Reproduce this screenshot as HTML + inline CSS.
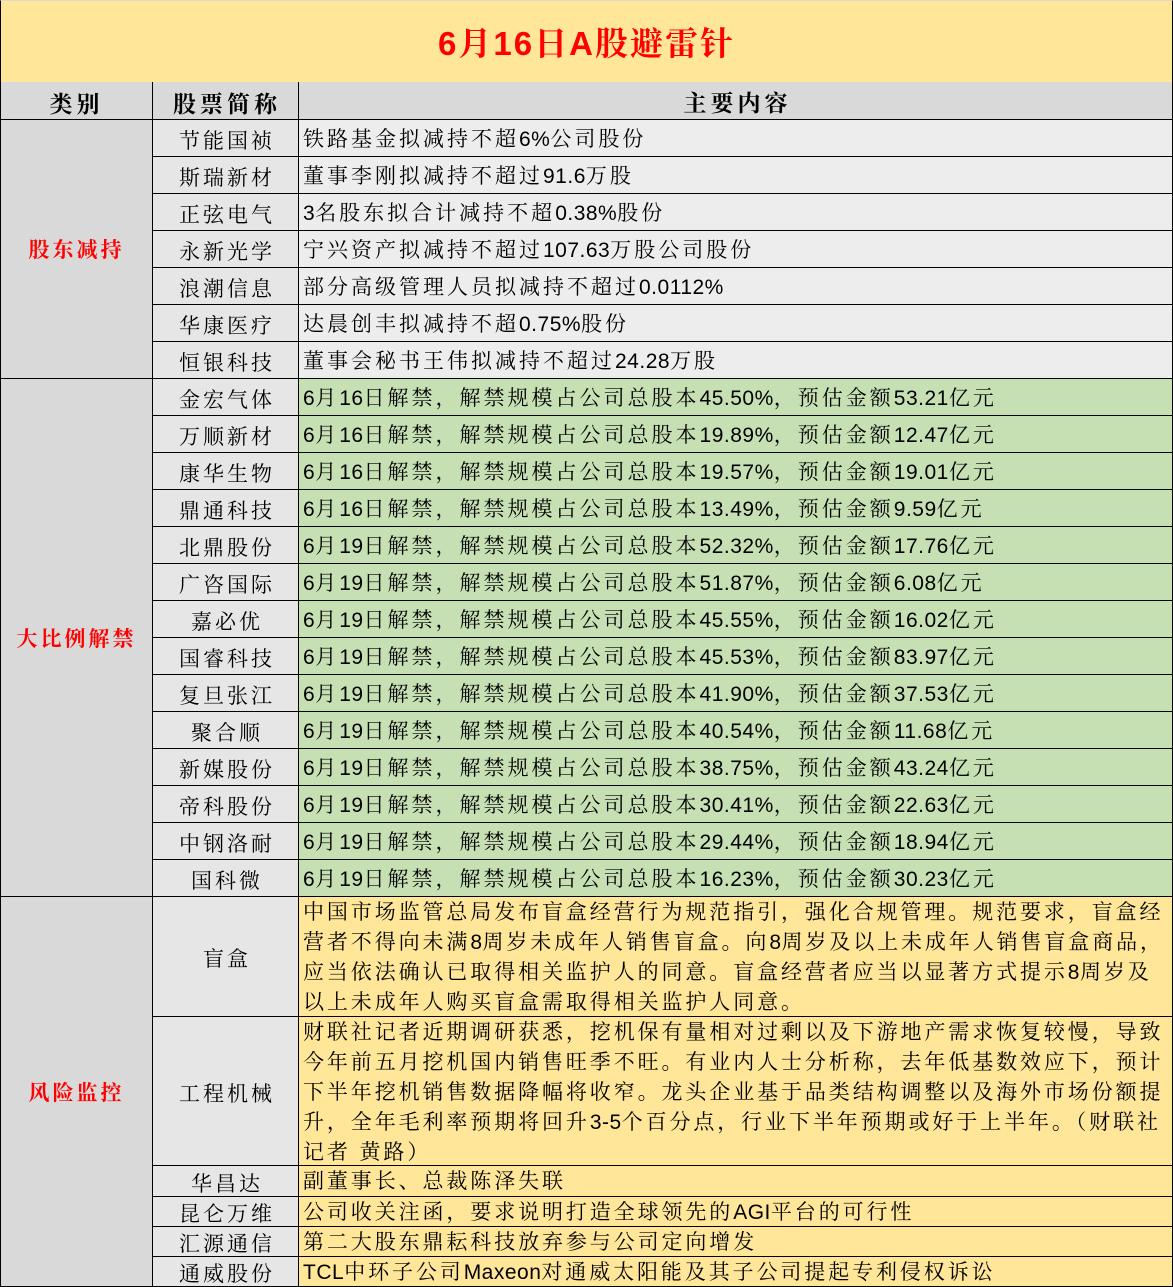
<!DOCTYPE html>
<html><head><meta charset="utf-8"><style>
*{margin:0;padding:0;box-sizing:border-box}
body{width:1173px;height:1287px;background:#fff;position:relative;overflow:hidden;font-family:"Liberation Sans","Noto Serif CJK SC",serif;color:#000}
.c{position:absolute;border-right:1px solid #000;border-bottom:1px solid #000;white-space:nowrap;overflow:hidden}
.a{left:0;width:153px;background:#D9D9D9;color:#f00;font-weight:bold;font-size:21px;letter-spacing:3px;display:flex;align-items:center;justify-content:center;border-left:1px solid #000}
.b{left:153px;width:146px;background:#E7E6E6;font-size:21px;letter-spacing:3px;text-align:center;display:flex;align-items:center;justify-content:center;padding-left:3px;padding-top:3px}
.t{left:299px;width:874px;font-size:21px;letter-spacing:3px;padding-left:4px;height:37px;line-height:39px}
i{font-style:normal;letter-spacing:0.5px}
.g1{background:#EDEDED}
.g2{background:#C6E0B4}
.g3{background:#FFE699;white-space:normal;line-height:30px;letter-spacing:2.9px;padding-right:0;padding-top:1px}
</style></head><body>
<div class="c" style="left:0;top:0;width:1173px;height:83px;background:#FFE699;border-top:1px solid #d9d9d9;border-left:1px solid #000;color:#f00;font-weight:bold;font-size:33px;letter-spacing:2px;text-align:center;line-height:86px">6月16日A股避雷针</div>
<div class="c a" style="top:82px;height:38px;color:#000;font-size:23px;letter-spacing:4px;padding-top:3px">类别</div>
<div class="c b" style="top:82px;height:38px;background:#D9D9D9;font-weight:bold;font-size:23px;letter-spacing:4px">股票简称</div>
<div class="c t" style="top:82px;height:38px;background:#D9D9D9;font-weight:bold;font-size:23px;letter-spacing:4px;text-align:center;line-height:42px">主要内容</div>

<div class="c a" style="top:120px;height:259px">股东减持</div>
<div class="c b" style="top:120px;height:37px">节能国祯</div><div class="c t g1" style="top:120px">铁路基金拟减持不超<i>6%</i>公司股份</div>
<div class="c b" style="top:157px;height:37px">斯瑞新材</div><div class="c t g1" style="top:157px">董事李刚拟减持不超过<i>91.6</i>万股</div>
<div class="c b" style="top:194px;height:37px">正弦电气</div><div class="c t g1" style="top:194px"><i>3</i>名股东拟合计减持不超<i>0.38%</i>股份</div>
<div class="c b" style="top:231px;height:37px">永新光学</div><div class="c t g1" style="top:231px">宁兴资产拟减持不超过<i>107.63</i>万股公司股份</div>
<div class="c b" style="top:268px;height:37px">浪潮信息</div><div class="c t g1" style="top:268px">部分高级管理人员拟减持不超过<i>0.0112%</i></div>
<div class="c b" style="top:305px;height:37px">华康医疗</div><div class="c t g1" style="top:305px">达晨创丰拟减持不超<i>0.75%</i>股份</div>
<div class="c b" style="top:342px;height:37px">恒银科技</div><div class="c t g1" style="top:342px">董事会秘书王伟拟减持不超过<i>24.28</i>万股</div>

<div class="c a" style="top:379px;height:518px">大比例解禁</div>
<div class="c b" style="top:379px;height:37px">金宏气体</div><div class="c t g2" style="top:379px"><i>6</i>月<i>16</i>日解禁，解禁规模占公司总股本<i>45.50%</i>，预估金额<i>53.21</i>亿元</div>
<div class="c b" style="top:416px;height:37px">万顺新材</div><div class="c t g2" style="top:416px"><i>6</i>月<i>16</i>日解禁，解禁规模占公司总股本<i>19.89%</i>，预估金额<i>12.47</i>亿元</div>
<div class="c b" style="top:453px;height:37px">康华生物</div><div class="c t g2" style="top:453px"><i>6</i>月<i>16</i>日解禁，解禁规模占公司总股本<i>19.57%</i>，预估金额<i>19.01</i>亿元</div>
<div class="c b" style="top:490px;height:37px">鼎通科技</div><div class="c t g2" style="top:490px"><i>6</i>月<i>16</i>日解禁，解禁规模占公司总股本<i>13.49%</i>，预估金额<i>9.59</i>亿元</div>
<div class="c b" style="top:527px;height:37px">北鼎股份</div><div class="c t g2" style="top:527px"><i>6</i>月<i>19</i>日解禁，解禁规模占公司总股本<i>52.32%</i>，预估金额<i>17.76</i>亿元</div>
<div class="c b" style="top:564px;height:37px">广咨国际</div><div class="c t g2" style="top:564px"><i>6</i>月<i>19</i>日解禁，解禁规模占公司总股本<i>51.87%</i>，预估金额<i>6.08</i>亿元</div>
<div class="c b" style="top:601px;height:37px">嘉必优</div><div class="c t g2" style="top:601px"><i>6</i>月<i>19</i>日解禁，解禁规模占公司总股本<i>45.55%</i>，预估金额<i>16.02</i>亿元</div>
<div class="c b" style="top:638px;height:37px">国睿科技</div><div class="c t g2" style="top:638px"><i>6</i>月<i>19</i>日解禁，解禁规模占公司总股本<i>45.53%</i>，预估金额<i>83.97</i>亿元</div>
<div class="c b" style="top:675px;height:37px">复旦张江</div><div class="c t g2" style="top:675px"><i>6</i>月<i>19</i>日解禁，解禁规模占公司总股本<i>41.90%</i>，预估金额<i>37.53</i>亿元</div>
<div class="c b" style="top:712px;height:37px">聚合顺</div><div class="c t g2" style="top:712px"><i>6</i>月<i>19</i>日解禁，解禁规模占公司总股本<i>40.54%</i>，预估金额<i>11.68</i>亿元</div>
<div class="c b" style="top:749px;height:37px">新媒股份</div><div class="c t g2" style="top:749px"><i>6</i>月<i>19</i>日解禁，解禁规模占公司总股本<i>38.75%</i>，预估金额<i>43.24</i>亿元</div>
<div class="c b" style="top:786px;height:37px">帝科股份</div><div class="c t g2" style="top:786px"><i>6</i>月<i>19</i>日解禁，解禁规模占公司总股本<i>30.41%</i>，预估金额<i>22.63</i>亿元</div>
<div class="c b" style="top:823px;height:37px">中钢洛耐</div><div class="c t g2" style="top:823px"><i>6</i>月<i>19</i>日解禁，解禁规模占公司总股本<i>29.44%</i>，预估金额<i>18.94</i>亿元</div>
<div class="c b" style="top:860px;height:37px">国科微</div><div class="c t g2" style="top:860px"><i>6</i>月<i>19</i>日解禁，解禁规模占公司总股本<i>16.23%</i>，预估金额<i>30.23</i>亿元</div>

<div class="c a" style="top:897px;height:390px">风险监控</div>
<div class="c b" style="top:897px;height:120px">盲盒</div>
<div class="c t g3" style="top:897px;height:120px">中国市场监管总局发布盲盒经营行为规范指引，强化合规管理。规范要求，盲盒经营者不得向未满<i>8</i>周岁未成年人销售盲盒。向<i>8</i>周岁及以上未成年人销售盲盒商品，应当依法确认已取得相关监护人的同意。盲盒经营者应当以显著方式提示<i>8</i>周岁及以上未成年人购买盲盒需取得相关监护人同意。</div>
<div class="c b" style="top:1017px;height:149px">工程机械</div>
<div class="c t g3" style="top:1017px;height:149px">财联社记者近期调研获悉，挖机保有量相对过剩以及下游地产需求恢复较慢，导致今年前五月挖机国内销售旺季不旺。有业内人士分析称，去年低基数效应下，预计下半年挖机销售数据降幅将收窄。龙头企业基于品类结构调整以及海外市场份额提升，全年毛利率预期将回升<i>3-5</i>个百分点，行业下半年预期或好于上半年。（财联社记者 黄路）</div>
<div class="c b" style="top:1166px;height:31px">华昌达</div><div class="c t g3" style="top:1166px;height:31px">副董事长、总裁陈泽失联</div>
<div class="c b" style="top:1197px;height:30px">昆仑万维</div><div class="c t g3" style="top:1197px;height:30px">公司收关注函，要求说明打造全球领先的<i>AGI</i>平台的可行性</div>
<div class="c b" style="top:1227px;height:30px">汇源通信</div><div class="c t g3" style="top:1227px;height:30px">第二大股东鼎耘科技放弃参与公司定向增发</div>
<div class="c b" style="top:1257px;height:30px">通威股份</div><div class="c t g3" style="top:1257px;height:30px"><i>TCL</i>中环子公司<i>Maxeon</i>对通威太阳能及其子公司提起专利侵权诉讼</div>
</body></html>
